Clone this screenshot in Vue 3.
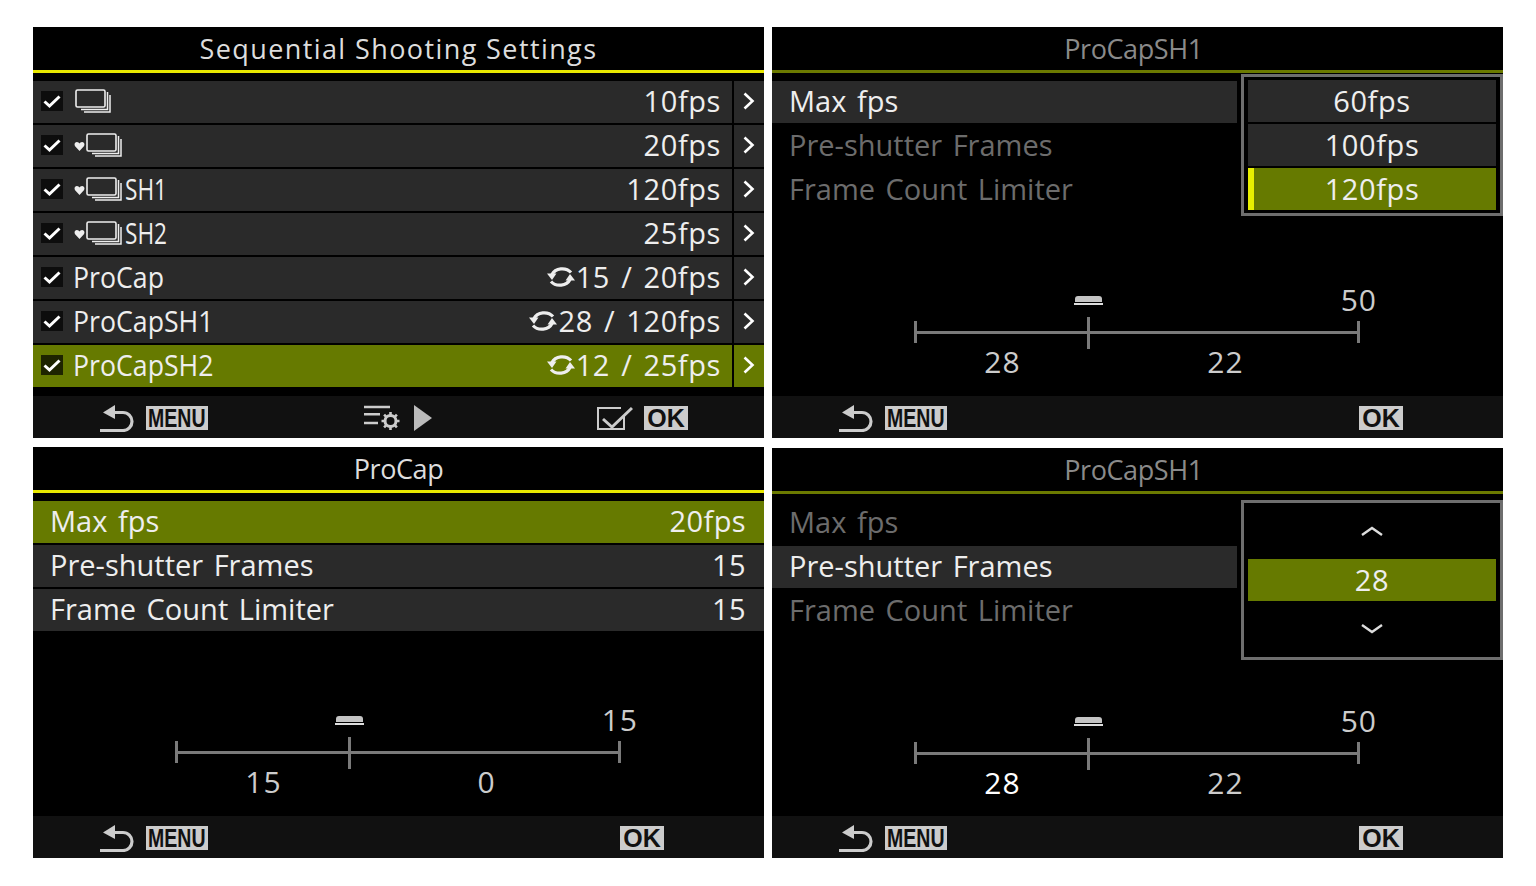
<script setup>
const sharedList = [
  { label: 'Max fps', value: '20fps' },
  { label: 'Pre-shutter Frames', value: '15' },
  { label: 'Frame Count Limiter', value: '15' },
]

const seqRows = [
  { drive: 'plain', value: '10fps' },
  { drive: 'silent', value: '20fps' },
  { drive: 'silent', tag: 'SH1', value: '120fps' },
  { drive: 'silent', tag: 'SH2', value: '25fps' },
  { label: 'ProCap', loop: true, value: '15 / 20fps' },
  { label: 'ProCapSH1', loop: true, value: '28 / 120fps' },
  { label: 'ProCapSH2', loop: true, value: '12 / 25fps', on: true },
]
</script>

<template>
  <svg class="defs" aria-hidden="true">
    <symbol id="stack" viewBox="0 0 36 24">
      <rect x="1" y="1" width="29" height="17" rx="1.5" fill="none" stroke="currentColor" stroke-width="1.6" />
      <path d="M32.5 3v17.5H6M35 6v17H9" fill="none" stroke="currentColor" stroke-width="1.5" />
    </symbol>
    <symbol id="heart" viewBox="0 0 12 12">
      <path d="M6 11 1.2 5.6C-.2 3.6 1 1 3.2 1 4.6 1 5.5 1.8 6 2.8 6.5 1.8 7.4 1 8.8 1 11 1 12.2 3.6 10.8 5.6Z" fill="currentColor" />
    </symbol>
    <symbol id="loop" viewBox="0 0 28 22">
      <path d="M24 6.5A11 9.2 0 0 0 5 8.5" fill="none" stroke="currentColor" stroke-width="3.2" />
      <path d="M0 7.5h9.5L5 14Z" fill="currentColor" />
      <path d="M4 15.5A11 9.2 0 0 0 23 13.500" fill="none" stroke="currentColor" stroke-width="3.2" />
      <path d="M28 14.500h-9.500L23 8Z" fill="currentColor" />
    </symbol>
    <symbol id="back" viewBox="0 0 34 27">
      <path d="M14 7.500H23A9 9 0 0 1 23 25.500H0" fill="none" stroke="currentColor" stroke-width="3.2" />
      <path d="M15 0V14L3 7.500Z" fill="currentColor" />
    </symbol>
    <symbol id="tune" viewBox="0 0 36 26">
      <path d="M0 2H26M0 9.300H16M0 18H14" fill="none" stroke="currentColor" stroke-width="2.6" />
      <circle cx="26.500" cy="16" r="5.500" fill="none" stroke="currentColor" stroke-width="3" />
      <path d="M26.500 7v3M26.500 22v3M17.500 16h3M32.500 16h3M20.100 9.600l2.200 2.200M30.700 20.200l2.200 2.200M20.100 22.400l2.200-2.200M30.700 11.800l2.200-2.200" fill="none" stroke="currentColor" stroke-width="2.6" />
    </symbol>
    <symbol id="tick-box" viewBox="0 0 36 26">
      <path d="M27 11V24H1V3H24" fill="none" stroke="currentColor" stroke-width="2" />
      <path d="M6 14 15 22 35 3" fill="none" stroke="currentColor" stroke-width="3" />
    </symbol>
  </svg>

  <div class="sheet">
    <!-- top left: the mode list -->
    <section class="panel">
      <h2 class="title">Sequential Shooting Settings</h2>
      <ul class="rows">
        <li v-for="row in seqRows" :key="row.value" class="row seq" :class="{ on: row.on }">
          <span class="check"><svg viewBox="0 0 22 20"><path d="M3.500 10.500 8.500 15 18.500 5.500" fill="none" stroke="#fff" stroke-width="3" /></svg></span>
          <span class="name">
            <svg v-if="row.drive === 'silent'" class="heart"><use href="#heart" /></svg>
            <svg v-if="row.drive" class="stack" :class="{ lead: row.drive === 'plain' }"><use href="#stack" /></svg>
            <span v-if="row.tag" class="tag">{{ row.tag }}</span>
            <span v-if="row.label" class="label">{{ row.label }}</span>
          </span>
          <span class="value">
            <svg v-if="row.loop" class="loop"><use href="#loop" /></svg>{{ row.value }}
          </span>
          <span class="more"><svg viewBox="0 0 14 20"><path d="M2.500 2.500 10.500 10 2.500 17.500" fill="none" stroke="#fff" stroke-width="2.6" /></svg></span>
        </li>
      </ul>
      <footer class="foot">
        <span class="hint">
          <svg class="back"><use href="#back" /></svg><b class="badge menu"><i>MENU</i></b>
        </span>
        <span class="hint mid">
          <svg class="tune"><use href="#tune" /></svg><span class="play"></span>
        </span>
        <span class="hint end wide">
          <svg class="tick-box"><use href="#tick-box" /></svg><b class="badge ok"><i>OK</i></b>
        </span>
      </footer>
    </section>

    <!-- top right: max fps popup -->
    <section class="panel dim">
      <h2 class="title tight">ProCapSH1</h2>
      <ul class="rows short">
        <li class="row plain"><span class="name">Max fps</span></li>
        <li class="row plain off"><span class="name">Pre-shutter Frames</span></li>
        <li class="row plain off"><span class="name">Frame Count Limiter</span></li>
      </ul>
      <div class="popup list">
        <div class="opt">60fps</div>
        <div class="opt">100fps</div>
        <div class="opt picked">120fps</div>
      </div>
      <div class="scale">
        <span class="top">50</span>
        <div class="track"><i class="mark"></i></div>
        <span class="seg">28</span>
        <span class="seg">22</span>
      </div>
      <footer class="foot">
        <span class="hint">
          <svg class="back"><use href="#back" /></svg><b class="badge menu"><i>MENU</i></b>
        </span>
        <span class="hint end">
          <b class="badge ok"><i>OK</i></b>
        </span>
      </footer>
    </section>

    <!-- bottom left: ProCap values -->
    <section class="panel">
      <h2 class="title tight">ProCap</h2>
      <ul class="rows wide-rows">
        <li v-for="(row, i) in sharedList" :key="row.label" class="row plain" :class="{ on: i === 0 }">
          <span class="name">{{ row.label }}</span>
          <span class="value">{{ row.value }}</span>
        </li>
      </ul>
      <div class="scale">
        <span class="top">15</span>
        <div class="track"><i class="mark"></i></div>
        <span class="seg">15</span>
        <span class="seg">0</span>
      </div>
      <footer class="foot">
        <span class="hint">
          <svg class="back"><use href="#back" /></svg><b class="badge menu"><i>MENU</i></b>
        </span>
        <span class="hint end">
          <b class="badge ok"><i>OK</i></b>
        </span>
      </footer>
    </section>

    <!-- bottom right: pre-shutter spinner -->
    <section class="panel dim low">
      <h2 class="title tight">ProCapSH1</h2>
      <ul class="rows short">
        <li class="row plain off"><span class="name">Max fps</span></li>
        <li class="row plain"><span class="name">Pre-shutter Frames</span></li>
        <li class="row plain off"><span class="name">Frame Count Limiter</span></li>
      </ul>
      <div class="popup spin">
        <svg class="caret" viewBox="0 0 22 12"><path d="M1 10 11 3 21 10" fill="none" stroke="#ddd" stroke-width="2.4" /></svg>
        <div class="opt picked bare">28</div>
        <svg class="caret" viewBox="0 0 22 12"><path d="M1 2 11 9 21 2" fill="none" stroke="#ddd" stroke-width="2.4" /></svg>
      </div>
      <div class="scale">
        <span class="top">50</span>
        <div class="track"><i class="mark"></i></div>
        <span class="seg bright">28</span>
        <span class="seg">22</span>
      </div>
      <footer class="foot">
        <span class="hint">
          <svg class="back"><use href="#back" /></svg><b class="badge menu"><i>MENU</i></b>
        </span>
        <span class="hint end">
          <b class="badge ok"><i>OK</i></b>
        </span>
      </footer>
    </section>
  </div>
</template>

<style>
html, body {
  background: #fff;
}
</style>

<style scoped>
.defs {
  position: absolute;
  width: 0;
  height: 0;
}

.sheet {
  display: grid;
  grid-template-columns: 731px 731px;
  grid-template-rows: 411px 411px;
  column-gap: 8px;
  row-gap: 9px;
  padding: 27px 33px 0;
  font-family: "Open Sans", "Noto Sans", sans-serif;
}

.panel {
  position: relative;
  display: flex;
  flex-direction: column;
  background: #000;
  color: #eee;
  overflow: hidden;
}

.panel.low {
  margin-top: 1px;
}

.title {
  margin: 0;
  height: 43px;
  border-bottom: 3px solid #e8e800;
  font-size: 27px;
  font-weight: 400;
  line-height: 44px;
  letter-spacing: 1.4px;
  text-align: center;
  color: #ddd;
}

.title.tight {
  letter-spacing: -0.4px;
}

.dim .title {
  padding-right: 8px;
  color: #8a8a8a;
  border-bottom-color: #6b7a00;
}

.rows {
  list-style: none;
  margin: 8px 0 0;
  padding: 0;
  display: flex;
  flex-direction: column;
  gap: 2px;
}

.rows.short {
  width: 465px;
}

.row {
  display: flex;
  align-items: center;
  box-sizing: border-box;
  height: 42px;
  padding-bottom: 2px;
  background: #2a2a2a;
  font-size: 29px;
  letter-spacing: 0.6px;
  word-spacing: 3px;
}

.row.on {
  background: #667a00;
}

.row.plain {
  padding: 0 18px 4px 17px;
  letter-spacing: 0;
  justify-content: space-between;
}

.row.off {
  background: none;
  color: #6c6c6c;
}

.check {
  flex: none;
  width: 22px;
  height: 20px;
  margin: 0 10px 0 8px;
  background: #0d0d0d;
}

.row.on .check {
  background: #1e2400;
}

.check svg {
  display: block;
  width: 22px;
  height: 20px;
}

.name {
  display: flex;
  align-items: center;
  flex: 1;
}

.label {
  display: block;
  padding-bottom: 2px;
  transform: scaleX(0.92);
  transform-origin: left center;
  letter-spacing: 0;
}

.heart {
  width: 11px;
  height: 11px;
  margin: 2px 1px 0 1px;
}

.stack {
  width: 36px;
  height: 24px;
}

.stack.lead {
  margin-left: 2px;
}

.tag {
  display: block;
  margin-left: 3px;
  padding-bottom: 2px;
  letter-spacing: 0;
  transform: scaleX(0.78);
  transform-origin: left center;
}

.value {
  display: flex;
  align-items: center;
  padding: 0 11px 2px 0;
  white-space: pre;
}

.row.plain .value {
  padding: 0;
  letter-spacing: 0.4px;
}

.loop {
  width: 28px;
  height: 22px;
  margin: 2px 1px 0 0;
}

.more {
  flex: none;
  display: flex;
  align-items: center;
  justify-content: center;
  width: 30px;
  height: 42px;
  margin-bottom: -2px;
  border-left: 2px solid #000;
}

.more svg {
  width: 14px;
  height: 20px;
  margin-top: -2px;
}

.popup {
  position: absolute;
  top: 47px;
  right: 0;
  box-sizing: border-box;
  width: 262px;
  border: 3px solid #6e6e6e;
  background: #000;
  padding: 3px 4px;
  display: flex;
  flex-direction: column;
  gap: 2px;
}

.popup.spin {
  top: 52px;
  height: 160px;
  padding: 0 4px;
  align-items: center;
  justify-content: center;
  gap: 22px;
}

.opt {
  align-self: stretch;
  height: 42px;
  background: #2a2a2a;
  font-size: 29px;
  letter-spacing: 0.6px;
  line-height: 42px;
  text-align: center;
}

.opt.picked {
  background: #667a00;
  border-left: 6px solid #e8f000;
  padding-right: 6px;
}

.opt.picked.bare {
  border-left: 0;
  padding-right: 0;
}

.caret {
  width: 22px;
  height: 12px;
}

.scale {
  display: grid;
  grid-template-columns: 174px 272px;
  grid-template-rows: auto auto auto;
  margin: auto 0 0 142px;
  width: 446px;
  padding-bottom: 14px;
  color: #ccc;
  font-size: 30px;
  letter-spacing: 1px;
}

.low .scale {
  padding-bottom: 13px;
}

.top {
  grid-column: 1 / 3;
  justify-self: end;
  margin: 0 -17px 1px 0;
  line-height: 40px;
}

.track {
  position: relative;
  grid-column: 1 / 3;
  height: 22px;
  box-sizing: border-box;
  border-left: 3px solid #7a7a7a;
  border-right: 3px solid #7a7a7a;
  background: linear-gradient(#7a7a7a, #7a7a7a) center / 100% 3px no-repeat;
}

.track .mark {
  position: absolute;
  left: 170px;
  top: -4px;
  width: 3px;
  height: 32px;
  background: #7a7a7a;
}

.track .mark::before {
  content: "";
  position: absolute;
  left: -12px;
  top: -21px;
  width: 27px;
  height: 6px;
  border-radius: 3px 3px 0 0;
  background: #c4c4c4;
}

.track .mark::after {
  content: "";
  position: absolute;
  left: -13px;
  top: -14px;
  width: 29px;
  height: 2px;
  background: #ddd;
}

.seg {
  margin-top: -1px;
  padding-left: 3px;
  text-align: center;
  line-height: 40px;
}

.seg.bright {
  color: #fff;
}

.foot {
  display: flex;
  align-items: center;
  flex: none;
  box-sizing: border-box;
  height: 42px;
  padding: 2px 0 0 67px;
  background: #111;
  color: #ccc;
}

.panel > .rows + .foot {
  margin-top: auto;
}

.hint {
  display: flex;
  align-items: center;
}

.hint.mid {
  margin-left: 156px;
}

.hint.end {
  margin-left: auto;
  margin-right: 100px;
}

.hint.end.wide {
  margin-right: 76px;
}

.back {
  width: 34px;
  height: 27px;
  margin-right: 12px;
}

.tune {
  width: 36px;
  height: 26px;
  margin-right: 14px;
}

.play {
  width: 0;
  height: 0;
  border-left: 18px solid #bbb;
  border-top: 13px solid transparent;
  border-bottom: 13px solid transparent;
}

.tick-box {
  width: 36px;
  height: 26px;
  margin-right: 11px;
}

.badge {
  display: flex;
  align-items: center;
  justify-content: center;
  height: 24px;
  background: #ccc;
  color: #111;
  font-family: "Liberation Sans", Arial, sans-serif;
  font-size: 25px;
  font-weight: 700;
}

.badge i {
  font-style: normal;
  display: block;
}

.badge.menu {
  width: 62px;
}

.badge.menu i {
  transform: scaleX(0.78);
}

.badge.ok {
  width: 44px;
}
</style>
